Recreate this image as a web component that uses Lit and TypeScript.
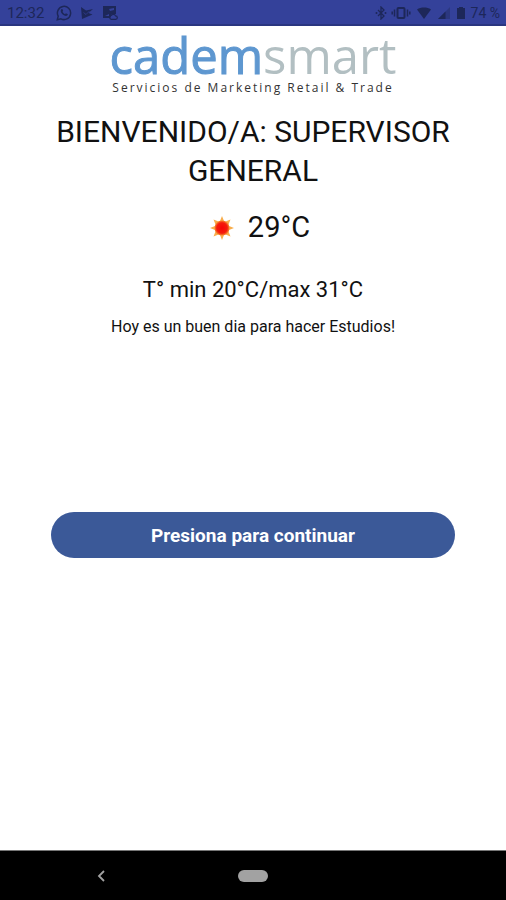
import { LitElement, html, css } from "lit";
import { customElement, property } from "lit/decorators.js";

@customElement("status-bar")
class StatusBar extends LitElement {
  static styles = css`
    :host {
      display: flex;
      align-items: center;
      justify-content: space-between;
      height: 26px;
      box-sizing: border-box;
      padding: 2px 6px 0 7px;
      background: #34419a;
      border-bottom: 2px solid #2a3680;
      color: #1d2759;
      font-size: 14px;
      line-height: 24px;
    }
    .group { display: flex; align-items: center; }
    .left { gap: 8px; }
    .right { gap: 4px; }
    .time { width: 41px; font-size: 15px; }
    svg { display: block; fill: currentColor; }
    .line { fill: none; stroke: currentColor; }
    .faint { opacity: 0.4; }
  `;

  render() {
    return html`
      <div class="group left">
        <span class="time">12:32</span>
        <svg width="16" height="16" viewBox="0 0 16 16">
          <path class="line" stroke-width="1.5" d="M1.3 14.7l.9-3.6A6.6 6.6 0 1 1 4.9 13.800z" />
          <path d="M5.300 4.300c.5-.5 1-.4 1.200 0l.6 1.400c.1.400-.4.800-.6 1.100.6 1.200 1.500 1.900 2.600 2.400.4-.4.700-1 1.100-.8l1.400.7c.4.300.1 1.100-.4 1.500-1.200.9-3 .2-4.500-1C5 8.300 4 5.700 5.300 4.300z" />
        </svg>
        <svg width="14" height="16" viewBox="0 0 14 16">
          <path d="M1 2l5 3.500L13 4 8.500 8l4 1.500L2 14z" />
          <path fill="none" stroke="#34419a" stroke-width="0.700" d="M3.500 7.500l2.500 2 3.500-3.500" />
        </svg>
        <svg width="16" height="16" viewBox="0 0 16 16">
          <path fill-rule="evenodd" d="M1 1h13v8h-4L8 13H1zM3 11h4V9L5 10zM7 4l1 2 4-1V3z" />
          <path class="line" stroke-width="1.200" d="M9 14.300a2 2 0 0 1 .3-3.800 2.300 2.300 0 0 1 4.200.4 1.700 1.700 0 0 1 .2 3.400z" />
        </svg>
      </div>
      <div class="group right">
        <svg width="12" height="14" viewBox="0 0 12 14">
          <path class="line" stroke-width="1.300" d="M3 4l6 6-3 3V1l3 3-6 6" />
          <circle cx="1.500" cy="7" r="1" /><circle cx="10.500" cy="7" r="1" />
        </svg>
        <svg width="20" height="14" viewBox="0 0 20 14">
          <rect class="line" stroke-width="2" x="6.500" y="2" width="7" height="10" rx="1" />
          <path class="line" stroke-width="1.500" d="M3.500 3.500v7M1.200 5.500v3M16.500 3.500v7M18.800 5.500v3" />
        </svg>
        <svg width="18" height="14" viewBox="0 0 18 14">
          <path d="M2 3.500c4-2.600 10-2.600 14 0L9 13z" />
        </svg>
        <svg width="14" height="14" viewBox="0 0 14 14">
          <path class="faint" d="M13 1v12H1z" />
          <path d="M8.500 5.500V13H1z" />
        </svg>
        <svg width="12" height="14" viewBox="0 0 12 14">
          <path d="M4 1h4v1h2v11H2V2h2z" />
        </svg>
        <span>74 %</span>
      </div>
    `;
  }
}

@customElement("brand-logo")
class BrandLogo extends LitElement {
  static styles = css`
    :host {
      display: flex;
      flex-direction: column;
      align-items: center;
      padding-top: 3px;
      font-family: "Open Sans", "Noto Sans", sans-serif;
      white-space: nowrap;
    }
    .name { font-size: 49px; line-height: 52px; }
    .first { color: #5e97d0; -webkit-text-stroke: 1px #5e97d0; }
    .second { color: #b2bfc2; }
    .tagline {
      font-size: 12px;
      line-height: 13px;
      letter-spacing: 2px;
      color: #333;
    }
  `;

  render() {
    return html`
      <div class="name"><span class="first">cadem</span><span class="second">smart</span></div>
      <div class="tagline">Servicios de Marketing Retail &amp; Trade</div>
    `;
  }
}

@customElement("sun-icon")
class SunIcon extends LitElement {
  static styles = css`
    :host { display: block; }
    svg { display: block; }
  `;

  render() {
    return html`
      <svg width="24" height="24" viewBox="0 0 24 24">
        <defs>
          <radialGradient id="core">
            <stop offset="0" stop-color="#f50606" />
            <stop offset="0.700" stop-color="#f51c0c" />
            <stop offset="1" stop-color="#f78a30" />
          </radialGradient>
        </defs>
        <path
          fill="#f8ad4c"
          d="M12 0l2 5 1.500.5L20.500 3.500 18.500 8.500 19 10 24 12 19 14 18.500 15.500 20.500 20.500 15.500 18.500 14 19 12 24 10 19 8.500 18.500 3.500 20.500 5.500 15.500 5 14 0 12 5 10 5.500 8.500 3.500 3.500 8.500 5.500 10 5z"
        />
        <circle cx="12" cy="12" r="7.500" fill="url(#core)" />
      </svg>
    `;
  }
}

@customElement("nav-bar")
class NavBar extends LitElement {
  static styles = css`
    :host {
      display: grid;
      grid-template-columns: 2fr 1fr 2fr;
      align-items: center;
      justify-items: center;
      height: 50px;
      box-sizing: border-box;
      background: #000;
      border-top: 1px solid #777;
    }
    button {
      display: block;
      border: 0;
      padding: 0;
      background: none;
      color: #a2a2a2;
    }
    svg { display: block; }
    .home {
      width: 30px;
      height: 12px;
      border-radius: 6px;
      background: #a2a2a2;
    }
  `;

  render() {
    return html`
      <button aria-label="Atrás">
        <svg width="8" height="12" viewBox="0 0 8 12">
          <path fill="none" stroke="currentColor" stroke-width="1.800" d="M7 1L2 6l5 5" />
        </svg>
      </button>
      <button class="home" aria-label="Inicio"></button>
    `;
  }
}

@customElement("app-root")
class AppRoot extends LitElement {
  @property() user = "SUPERVISOR GENERAL";
  @property({ type: Number }) current = 29;
  @property({ type: Number }) min = 20;
  @property({ type: Number }) max = 31;

  static styles = css`
    :host {
      display: flex;
      flex-direction: column;
      min-height: 100vh;
      background: #fff;
      color: #111;
      font-family: Roboto, "Noto Sans", sans-serif;
    }
    main {
      flex: 1;
      display: flex;
      flex-direction: column;
      text-align: center;
      padding: 0 10%;
    }
    h1, p { margin: 0; font-weight: 400; }
    h1 { margin-top: 18px; font-size: 30px; line-height: 39px; }
    .now {
      display: flex;
      align-items: center;
      justify-content: center;
      margin-top: 18px;
      font-size: 29px;
      line-height: 39px;
    }
    sun-icon { padding: 0 14px; }
    .range { margin-top: 28px; font-size: 22px; line-height: 30px; }
    .message { margin-top: 12px; font-size: 16px; line-height: 20px; }
    .continue {
      margin-top: 175px;
      height: 46px;
      padding: 2px 0 0;
      border: 0;
      border-radius: 23px;
      background: #3b5998;
      color: #fff;
      font: 700 19px/24px Roboto, "Noto Sans", sans-serif;
    }
  `;

  render() {
    return html`
      <status-bar></status-bar>
      <main>
        <brand-logo></brand-logo>
        <h1>${`BIENVENIDO/A: ${this.user}`}</h1>
        <div class="now"><sun-icon></sun-icon><span>${`${this.current}°C`}</span></div>
        <p class="range">${`T° min ${this.min}°C/max ${this.max}°C`}</p>
        <p class="message">Hoy es un buen dia para hacer Estudios!</p>
        <button class="continue">Presiona para continuar</button>
      </main>
      <nav-bar></nav-bar>
    `;
  }
}
